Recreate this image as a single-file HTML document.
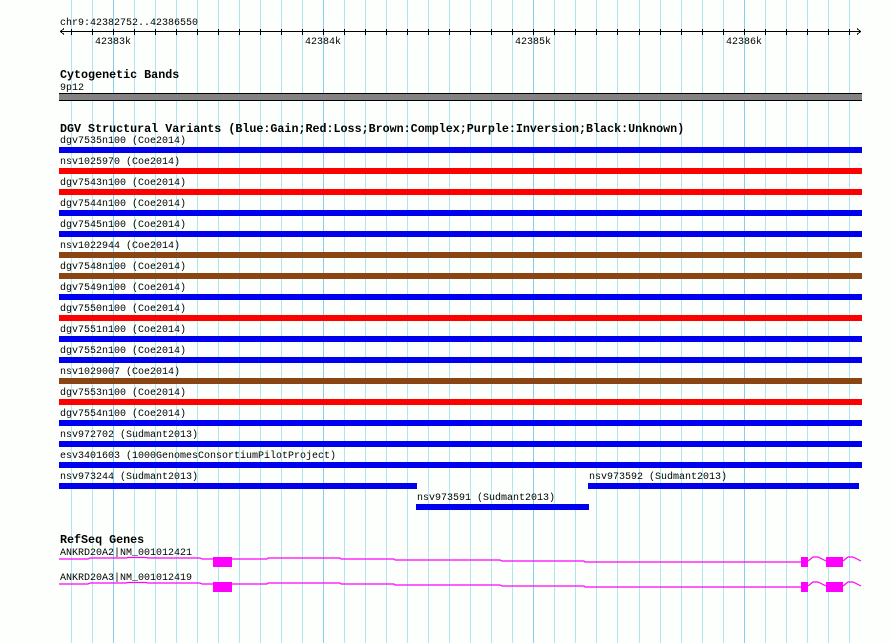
<!DOCTYPE html>
<html><head><meta charset="utf-8"><style>
html,body{margin:0;padding:0;background:#fcfffc;}
svg{display:block}
text{font-family:"Liberation Mono","DejaVu Sans Mono",monospace;font-size:10px;fill:#000}
.t{font-weight:bold;font-size:11.7px}
</style></head><body>
<svg width="890" height="643" viewBox="0 0 890 643" xmlns="http://www.w3.org/2000/svg">
<rect width="890" height="643" fill="#fcfffc"/>
<g id="grid" stroke="#aee8ee" stroke-width="1"></g>
<g stroke="#000" stroke-width="1" shape-rendering="crispEdges">
<line x1="60" y1="31.5" x2="861" y2="31.5"/>
<polyline points="64,28.5 60.5,31.5 64,34.5" fill="none"/>
<polyline points="857,28.5 860.5,31.5 857,34.5" fill="none"/>
<g id="ticks"></g>
</g>
<text x="60" y="25">chr9:42382752..42386550</text>
<text x="113" y="44" text-anchor="middle">42383k</text>
<text x="323" y="44" text-anchor="middle">42384k</text>
<text x="533" y="44" text-anchor="middle">42385k</text>
<text x="744" y="44" text-anchor="middle">42386k</text>
<text class="t" x="60" y="78">Cytogenetic Bands</text>
<text x="60" y="90">9p12</text>
<rect x="59" y="93" width="803" height="8" fill="#858285"/>
<rect x="59" y="93" width="803" height="1" fill="#000"/>
<rect x="59" y="100" width="803" height="1" fill="#000"/>
<text class="t" x="60" y="132">DGV Structural Variants (Blue:Gain;Red:Loss;Brown:Complex;Purple:Inversion;Black:Unknown)</text>
<g id="rows"></g>
<text class="t" x="60" y="543">RefSeq Genes</text>
<text x="60" y="555">ANKRD20A2|NM_001012421</text>
<text x="60" y="580">ANKRD20A3|NM_001012419</text>
<g fill="none" stroke="#ff00ff" stroke-width="1.2">
<polyline points="59,559 88,559 90,558 126,558 128,557.5 146,557.5 148,558 200,558 202,559 232,559 267,559 268,558 340,558 341,559 394,559 395,560 500,560 502,561 584,561 585,562 801,562"/>
<polyline points="808,561 813,557 818,557 826,561"/>
<polyline points="843,561 848,557 853,557 861,561"/>
<polyline points="59,584 88,584 90,583 126,583 128,582.5 146,582.5 148,583 200,583 202,584 232,584 267,584 268,583 340,583 341,584 394,584 395,585 500,585 502,586 584,586 585,587 801,587"/>
<polyline points="808,586 813,582 818,582 826,586"/>
<polyline points="843,586 848,582 853,582 861,586"/>
</g>
<g fill="#ff00ff">
<rect x="213" y="557" width="19" height="10"/>
<rect x="801" y="557" width="7" height="10"/>
<rect x="826" y="557" width="17" height="10"/>
<rect x="213" y="582" width="19" height="10"/>
<rect x="801" y="582" width="7" height="10"/>
<rect x="826" y="582" width="17" height="10"/>
</g>
</svg>
<script>
var ns="http://www.w3.org/2000/svg";
var g=document.getElementById("grid"),tk=document.getElementById("ticks");
for(var i=0;i<38;i++){var x=Math.round(70.7+i*21.03)+0.5;
var maj=(i%10==2);
var l=document.createElementNS(ns,"line");l.setAttribute("x1",x);l.setAttribute("x2",x);l.setAttribute("y1",0);l.setAttribute("y2",643);
if(maj)l.setAttribute("stroke","#88ccee");g.appendChild(l);
var t=document.createElementNS(ns,"line");t.setAttribute("x1",x);t.setAttribute("x2",x);t.setAttribute("y1",29);t.setAttribute("y2",35);tk.appendChild(t);}
var B="#0000ee",R="#ff0000",N="#8b4513";
var rows=[["dgv7535n100 (Coe2014)",B],["nsv1025970 (Coe2014)",R],["dgv7543n100 (Coe2014)",R],["dgv7544n100 (Coe2014)",B],["dgv7545n100 (Coe2014)",B],["nsv1022944 (Coe2014)",N],["dgv7548n100 (Coe2014)",N],["dgv7549n100 (Coe2014)",B],["dgv7550n100 (Coe2014)",R],["dgv7551n100 (Coe2014)",B],["dgv7552n100 (Coe2014)",B],["nsv1029007 (Coe2014)",N],["dgv7553n100 (Coe2014)",R],["dgv7554n100 (Coe2014)",B],["nsv972702 (Sudmant2013)",B],["esv3401603 (1000GenomesConsortiumPilotProject)",B]];
var rg=document.getElementById("rows");
function add(label,x,w,k,c){var y=147+21*k;
var t=document.createElementNS(ns,"text");t.setAttribute("x",x+1);t.setAttribute("y",y-4);t.textContent=label;rg.appendChild(t);
var r=document.createElementNS(ns,"rect");r.setAttribute("x",x);r.setAttribute("y",y);r.setAttribute("width",w);r.setAttribute("height",6);r.setAttribute("fill",c);rg.appendChild(r);}
rows.forEach(function(r,k){add(r[0],59,803,k,r[1]);});
add("nsv973244 (Sudmant2013)",59,358,16,B);
add("nsv973592 (Sudmant2013)",588,271,16,B);
add("nsv973591 (Sudmant2013)",416,173,17,B);
</script>
</body></html>
